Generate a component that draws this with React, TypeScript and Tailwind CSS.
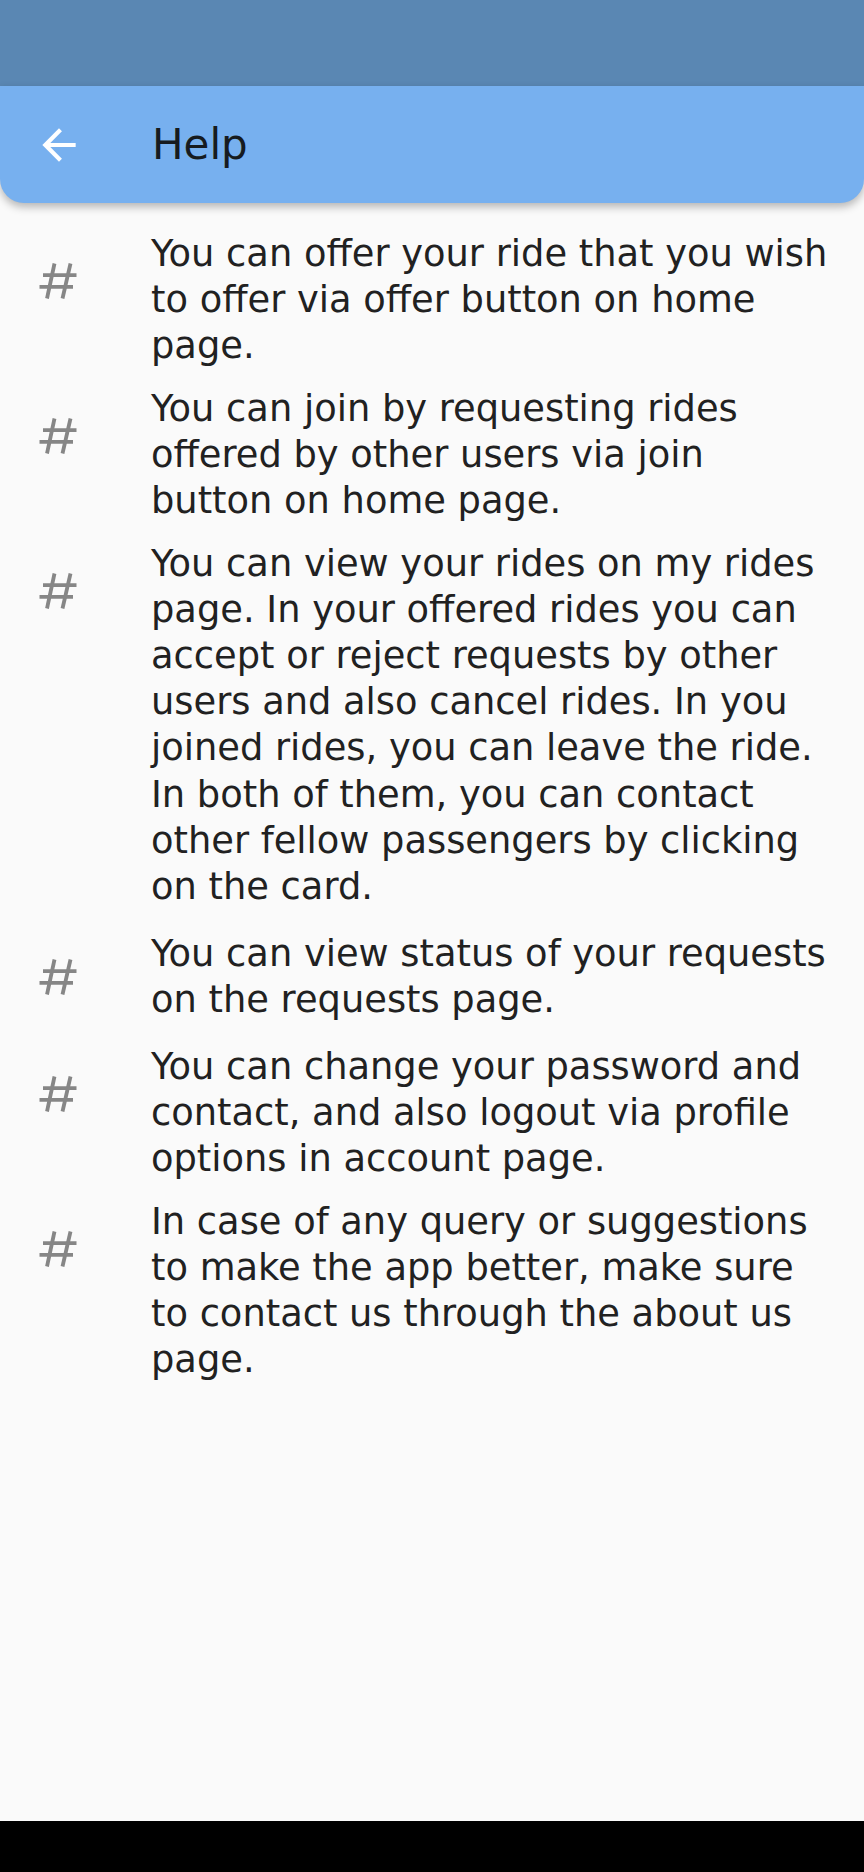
const helpItems: string[][] = [
  ['You can offer your ride that you wish', 'to offer via offer button on home', 'page.'],
  ['You can join by requesting rides', 'offered by other users via join', 'button on home page.'],
  [
    'You can view your rides on my rides',
    'page. In your offered rides you can',
    'accept or reject requests by other',
    'users and also cancel rides. In you',
    'joined rides, you can leave the ride.',
    'In both of them, you can contact',
    'other fellow passengers by clicking',
    'on the card.',
  ],
  ['You can view status of your requests', 'on the requests page.'],
  ['You can change your password and', 'contact, and also logout via profile', 'options in account page.'],
  [
    'In case of any query or suggestions',
    'to make the app better, make sure',
    'to contact us through the about us',
    'page.',
  ],
];

function HashIcon() {
  return (
    <svg width="40" height="36" viewBox="0 0 40 36" fill="none" stroke="#868686" strokeWidth="3.8">
      <path d="M15.5 0.5 L8 35.5" />
      <path d="M31.5 0.5 L23.5 35.5" />
      <path d="M4 12.2 H37.5" />
      <path d="M0.5 23.8 H34" />
    </svg>
  );
}

function HelpRow({ lines }: { lines: string[] }) {
  return (
    <div className="flex items-start min-h-[117px]">
      <div className="w-[151px] h-[117px] flex items-center pl-[39px] shrink-0">
        <HashIcon />
      </div>
      <div className="self-center py-[8.5px] text-[36.8px] leading-[46.1px] text-[#212121]">
        {lines.map((l) => (
          <div key={l} className="whitespace-nowrap">{l}</div>
        ))}
      </div>
    </div>
  );
}

export default function App() {
  return (
    <div className="h-[1872px] flex flex-col bg-[#fafafa]" style={{ fontFamily: '"DejaVu Sans", "Noto Sans", sans-serif' }}>
      <div className="h-[86px] shrink-0 bg-[#5a87b3]" />
      <header className="relative z-10 h-[117px] shrink-0 flex items-center bg-[#77b0ef] rounded-b-[24px] shadow-[0_4px_8px_rgba(0,0,0,0.28)]">
        <button className="ml-[34px] w-[50px] h-[50px] flex items-center justify-center">
          <svg width="50" height="50" viewBox="0 0 24 24" fill="#ffffff">
            <path d="M20 11H7.83l5.59-5.59L12 4l-8 8 8 8 1.41-1.41L7.83 13H20v-2z" />
          </svg>
        </button>
        <h1 className="ml-[68px] text-[42px] leading-none text-[#161b20] font-normal">Help</h1>
      </header>
      <main className="flex-1 pt-[19px]">
        {helpItems.map((lines, i) => (
          <HelpRow key={i} lines={lines} />
        ))}
      </main>
      <div className="h-[51px] shrink-0 bg-black" />
    </div>
  );
}
